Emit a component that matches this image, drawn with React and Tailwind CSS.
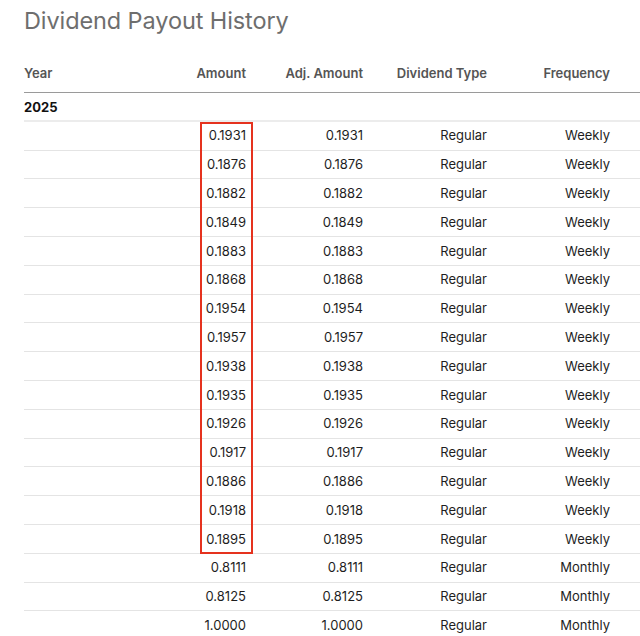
const WEEKLY = [
  '0.1931', '0.1876', '0.1882', '0.1849', '0.1883', '0.1868', '0.1954', '0.1957',
  '0.1938', '0.1935', '0.1926', '0.1917', '0.1886', '0.1918', '0.1895',
];

const ROWS = [
  ...WEEKLY.map(a => ({ amount: a, type: 'Regular', freq: 'Weekly' })),
  { amount: '0.8111', type: 'Regular', freq: 'Monthly' },
  { amount: '0.8125', type: 'Regular', freq: 'Monthly' },
  { amount: '1.0000', type: 'Regular', freq: 'Monthly' },
];

const COLS = 'grid grid-cols-[172px_50px_117px_124px_123px_1fr]';

export default function App() {
  return (
    <div className="h-[636px] overflow-hidden bg-white pl-6 font-['Inter','Liberation_Sans',sans-serif]">
      <h1 className="pt-[7px] text-[23.5px] leading-[28px] tracking-[-0.1px] text-[#6e6e6e]">
        Dividend Payout History
      </h1>

      <div className="relative mt-[29px]">
        <div className={`${COLS} h-[29px] items-start border-b-[1.5px] border-[#9a9a9a] text-[13px] font-semibold text-[#555]`}>
          <div>Year</div>
          <div className="text-right">Amount</div>
          <div className="text-right">Adj. Amount</div>
          <div className="text-right">Dividend Type</div>
          <div className="text-right">Frequency</div>
          <div />
        </div>

        <div className={`${COLS} h-[28.8px] items-center border-b-2 border-[#ececec] pt-[3px] text-[13px] font-bold text-[#111]`}>
          <div>2025</div>
        </div>

        {ROWS.map((r, i) => (
          <div key={i} className={`${COLS} h-[28.8px] items-center border-b-[1.5px] border-[#e4e4e4] pt-px text-[13px] text-[#1e1e1e]`}>
            <div />
            <div className="text-right">{r.amount}</div>
            <div className="text-right">{r.amount}</div>
            <div className="text-right">{r.type}</div>
            <div className="text-right">{r.freq}</div>
            <div />
          </div>
        ))}

        {/* highlight box drawn over the amount column */}
        <div className="pointer-events-none absolute left-[176px] top-[58px] h-[432px] w-[53px] border-2 border-[#e5321e]" />
      </div>
    </div>
  );
}
